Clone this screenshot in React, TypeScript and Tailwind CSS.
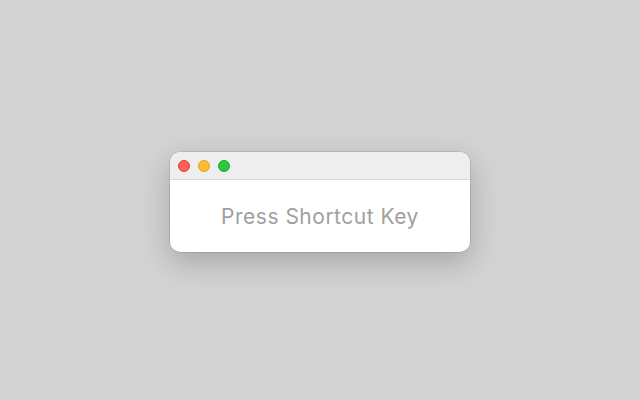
export default function App() {
  return (
    <div className="flex h-[400px] w-[640px] items-center justify-center bg-[#d3d3d3] pt-[4px] font-['Inter','Noto_Sans',sans-serif]">
      <div className="flex h-[100px] w-[300px] flex-col overflow-hidden rounded-[10px] bg-white shadow-[0_10px_30px_rgba(0,0,0,0.22),0_0_0_0.5px_rgba(0,0,0,0.18)]">
        <div className="flex h-[28px] shrink-0 items-center gap-2 border-b border-[#d6d6d6] bg-[#eeeeee] px-[8px] pt-[1px]">
          <span className="h-3 w-3 rounded-full border-[0.5px] border-[#e0443e] bg-[#fe5f57]" />
          <span className="h-3 w-3 rounded-full border-[0.5px] border-[#dea123] bg-[#febc2e]" />
          <span className="h-3 w-3 rounded-full border-[0.5px] border-[#1aab29] bg-[#28c840]" />
        </div>
        <div className="flex flex-1 items-center justify-center pt-[2px]">
          <span className="text-[21px] tracking-[0.5px] text-[#a0a0a0]">Press Shortcut Key</span>
        </div>
      </div>
    </div>
  );
}
